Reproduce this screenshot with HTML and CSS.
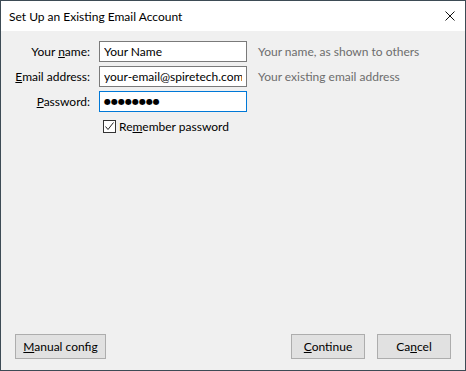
FILE: index.html
```html
<!DOCTYPE html>
<html lang="en">
<head>
    <meta charset="UTF-8">
    <title>Set Up an Existing Email Account</title>
    <link rel="stylesheet" href="styles.css">
</head>
<body>
    <div class="window">
        <div class="titlebar">
            <div class="title">Set Up an Existing Email Account</div>
            <svg class="close" width="10" height="10" viewBox="0 0 10 10">
                <path d="M0.5 0.5 L9.5 9.5 M9.5 0.5 L0.5 9.5" stroke="#111" stroke-width="1" fill="none"/>
            </svg>
        </div>

        <div class="content">
            <!-- Account form -->
            <div class="form">
                <label for="realname">Your <u>n</u>ame:</label>
                <input type="text" id="realname" value="Your Name" readonly>
                <div class="hint">Your name, as shown to others</div>

                <label for="email"><u>E</u>mail address:</label>
                <input type="text" id="email" value="your-email@spiretech.com" readonly>
                <div class="hint">Your existing email address</div>

                <label for="password"><u>P</u>assword:</label>
                <div class="field focused" id="password"><span class="dots">●●●●●●●●</span></div>
                <div class="hint"></div>

                <div></div>
                <div class="remember">
                    <span class="checkbox">
                        <svg width="11" height="11" viewBox="0 0 11 11">
                            <path d="M1.5 5.5 L4 8.5 L9.5 1.5" stroke="#222" stroke-width="1" fill="none"/>
                        </svg>
                    </span>
                    <span>Re<u>m</u>ember password</span>
                </div>
            </div>

            <!-- Dialog buttons -->
            <div class="buttons">
                <button class="btn wide"><u>M</u>anual config</button>
                <div class="spacer"></div>
                <button class="btn"><u>C</u>ontinue</button>
                <button class="btn">Ca<u>n</u>cel</button>
            </div>
        </div>
    </div>
</body>
</html>
```

FILE: styles.css
```css
body {
    margin: 0;
    font-family: Lato, "Noto Sans", sans-serif;
    font-size: 12px;
    color: #000;
    background: #f0f0f0;
}

.window {
    width: 466px;
    height: 371px;
    box-sizing: border-box;
    border: 1px solid #3d4b55;
    display: flex;
    flex-direction: column;
}

.titlebar {
    height: 30px;
    background: #fff;
    display: flex;
    align-items: center;
    justify-content: space-between;
    padding: 0 10px 0 8px;
}

.title {
    color: #000;
}

.close {
    display: block;
}

.content {
    flex: 1;
    background: #f0f0f0;
    display: flex;
    flex-direction: column;
    justify-content: space-between;
    padding: 10px 14px 11px 14px;
}

.form {
    display: grid;
    grid-template-columns: 75px 148px auto;
    column-gap: 9px;
    row-gap: 4px;
    align-items: center;
}

.form label {
    text-align: right;
    white-space: nowrap;
}

.form input,
.field {
    height: 21px;
    box-sizing: border-box;
    border: 1px solid #7a7a7a;
    background: #fff;
    padding: 0 4px;
    font-family: inherit;
    font-size: 12px;
    color: #000;
    outline: none;
    margin: 0;
    width: 148px;
}

.field {
    display: flex;
    align-items: center;
}

.field.focused {
    border-color: #0078d7;
}

.dots {
    font-family: "DejaVu Sans", sans-serif;
    font-size: 8px;
    letter-spacing: 0;
}

.hint {
    color: #6d6d6d;
    padding-left: 2px;
    white-space: nowrap;
}

.remember {
    display: flex;
    align-items: center;
    gap: 3px;
    padding-left: 4px;
    margin-top: 3px;
}

.checkbox {
    width: 13px;
    height: 13px;
    box-sizing: border-box;
    border: 1px solid #333;
    background: #fff;
    display: flex;
    align-items: center;
    justify-content: center;
}

.checkbox svg {
    display: block;
}

.buttons {
    display: flex;
    gap: 12px;
}

.spacer {
    flex: 1;
}

.btn {
    width: 74px;
    height: 25px;
    background: #e1e1e1;
    border: 1px solid #adadad;
    font-family: inherit;
    font-size: 12px;
    color: #000;
    padding: 0;
}

.btn.wide {
    width: 91px;
}
```
